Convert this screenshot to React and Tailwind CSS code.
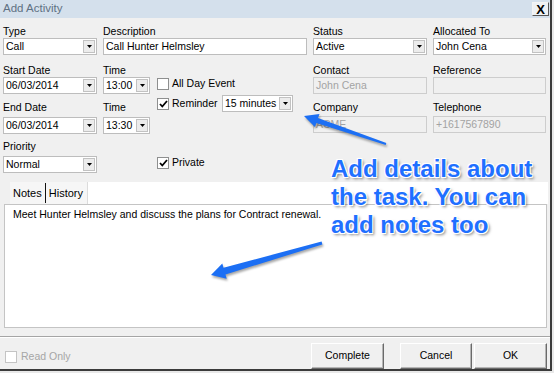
import React from "react";

const ui = "font-['Liberation_Sans',Arial,sans-serif] text-[10.5px] text-black";

function DropArrow() {
    return (
        <div className="m-px flex w-[12px] items-center justify-center border border-[#c2c2c2] bg-[#ececec]">
            <svg width="5" height="3" viewBox="0 0 5 3">
                <path d="M0 0H5L2.5 3z" fill="#000" />
            </svg>
        </div>
    );
}

function Combo({ value, className = "" }) {
    return (
        <div className={`flex h-[17px] border border-[#bdbdbd] bg-white ${className}`}>
            <div className="flex-1 truncate pl-[2px] leading-[14px]">{value}</div>
            <DropArrow />
        </div>
    );
}

function TextBox({ value, disabled, className = "" }) {
    return (
        <div
            className={`h-[17px] truncate border pl-[2px] leading-[15px] ${
                disabled ? "border-[#cdcdcd] bg-[#f0f0f0] text-[#a3a3a3]" : "border-[#bdbdbd] bg-white"
            } ${className}`}
        >
            {value}
        </div>
    );
}

function Check({ checked, disabled }) {
    return (
        <span
            className={`flex h-[12px] w-[12px] shrink-0 items-center justify-center border bg-white ${
                disabled ? "border-[#c4c4c4]" : "border-[#8e8f8f]"
            }`}
        >
            {checked && (
                <svg width="9" height="8" viewBox="0 0 9 8">
                    <path d="M1 4l2.3 2.5L8 1" stroke="#000" strokeWidth="1.8" fill="none" />
                </svg>
            )}
        </span>
    );
}

function Field({ label, children, className = "" }) {
    return (
        <div className={className}>
            <div className="h-[13px] leading-[13px]">{label}</div>
            {children}
        </div>
    );
}

function Button({ children, className = "" }) {
    return (
        <div
            className={`flex h-[26px] items-center justify-center border border-t-white border-l-white border-r-[#6a6a6a] border-b-[#6a6a6a] bg-[#f0f0f0] shadow-[inset_-1px_-1px_0_#b5b5b5] ${className}`}
        >
            {children}
        </div>
    );
}

export default function App() {
    return (
        <div className={`relative h-[373px] w-[554px] overflow-hidden bg-[#e9e9e9] ${ui}`}>
            <div className="flex h-[371px] w-[552px] flex-col border-r-2 border-b-2 border-[#3b3b3b] bg-[#f0f0f0]">
                {/* title bar */}
                <div className="flex h-[18px] shrink-0 items-center justify-between bg-[#d4e0ec] pl-[3px] pr-[1px]">
                    <span className="text-[11.5px] text-[#5f7183]">Add Activity</span>
                    <div className="flex h-[14px] w-[17px] items-center justify-center border border-t-[#f4f4f4] border-l-[#f4f4f4] border-r-[#555] border-b-[#555] bg-[#eef1f4] text-[13px] font-bold leading-none">
                        X
                    </div>
                </div>

                {/* form */}
                <div className="grid grid-cols-[94px_47px_151px_114px_113px] grid-rows-[39px_37px_39px_42px] gap-x-[6px] pl-[3px] pt-[7px]">
                    <Field label="Type">
                        <Combo value="Call" />
                    </Field>
                    <Field label="Description" className="col-span-2">
                        <TextBox value="Call Hunter Helmsley" />
                    </Field>
                    <Field label="Status">
                        <Combo value="Active" />
                    </Field>
                    <Field label="Allocated To">
                        <Combo value="John Cena" />
                    </Field>

                    <Field label="Start Date">
                        <Combo value="06/03/2014" />
                    </Field>
                    <Field label="Time">
                        <Combo value="13:00" />
                    </Field>
                    <div className="flex flex-col pt-[13px] pl-[1px]">
                        <div className="flex h-[13px] items-center gap-[3px]">
                            <Check />
                            <span>All Day Event</span>
                        </div>
                        <div className="mt-[5px] flex h-[17px] items-center gap-[3px]">
                            <Check checked />
                            <span className="w-[47px]">Reminder</span>
                            <Combo value="15 minutes" className="w-[71px]" />
                        </div>
                    </div>
                    <Field label="Contact">
                        <TextBox value="John Cena" disabled />
                    </Field>
                    <Field label="Reference">
                        <TextBox value="" disabled />
                    </Field>

                    <Field label="End Date">
                        <Combo value="06/03/2014" className="mt-[3px]" />
                    </Field>
                    <Field label="Time">
                        <Combo value="13:30" className="mt-[3px]" />
                    </Field>
                    <div />
                    <Field label="Company">
                        <TextBox value="ACME" disabled className="mt-[2px]" />
                    </Field>
                    <Field label="Telephone">
                        <TextBox value="+1617567890" disabled className="mt-[2px]" />
                    </Field>

                    <Field label="Priority">
                        <Combo value="Normal" className="mt-[3px]" />
                    </Field>
                    <div />
                    <div className="flex items-center gap-[3px] pt-[15px] pl-[1px] self-start">
                        <Check checked />
                        <span>Private</span>
                    </div>
                </div>

                {/* tabs */}
                <div className="flex h-[22px] pl-[4px] pr-[2px]">
                    <div className="w-[6px]" />
                    <div className="flex items-center bg-[#f6f6f6] pl-[3px] pr-[3px] text-[11px]">Notes</div>
                    <div className="my-[1px] w-px bg-[#111]" />
                    <div className="flex items-center border-r border-[#dcdcdc] bg-[#f6f6f6] pl-[3px] pr-[4px] text-[11px]">
                        History
                    </div>
                    <div className="flex-1 bg-white" />
                </div>
                <div className="ml-[4px] h-[127px] w-[543px] border border-[#c4c4c4] bg-white pl-[8px] pt-[2px]">
                    Meet Hunter Helmsley and discuss the plans for Contract renewal.
                </div>

                {/* footer */}
                <div className="mt-[8px] flex flex-1 items-start border-t border-[#a5a5a5] shadow-[inset_0_1px_0_#fff]">
                    <div className="ml-[5px] mt-[12px] flex items-center gap-[4px] text-[#a6a6a6]">
                        <Check disabled />
                        <span>Read Only</span>
                    </div>
                    <div className="ml-auto mr-[3px] mt-[6px] flex">
                        <Button className="w-[73px]">Complete</Button>
                        <Button className="ml-[16px] w-[72px]">Cancel</Button>
                        <Button className="ml-[2px] w-[73px]">OK</Button>
                    </div>
                </div>
            </div>

            {/* annotation overlay */}
            <svg
                className="pointer-events-none absolute left-0 top-0 drop-shadow-[1px_2px_1px_rgba(0,0,0,0.35)]"
                width="554"
                height="373"
                viewBox="0 0 554 373"
            >
                <polygon
                    points="304,116 319.5,113.9 318,118.1 386.3,143.1 385.7,144.9 316.4,122.9 314.9,127.1"
                    fill="#1c6ff4"
                />
                <polygon
                    points="211,275 222.3,263.4 223.5,267.7 321.6,241.6 322.4,244.4 225.5,274.5 226.7,278.8"
                    fill="#1c6ff4"
                />
            </svg>
            <div className="pointer-events-none absolute left-[331px] top-[155px] font-['Liberation_Sans',Arial,sans-serif] text-[24px] font-bold leading-[28px] text-[#1f70ff] [text-shadow:-1px_-1px_0_#fff,1px_-1px_0_#fff,-1px_1px_0_#fff,1px_1px_0_#fff,0_0_2px_#fff,2px_2px_3px_rgba(0,0,0,0.5)]">
                <div>Add details about</div>
                <div>the task. You can</div>
                <div>add notes too</div>
            </div>
        </div>
    );
}
